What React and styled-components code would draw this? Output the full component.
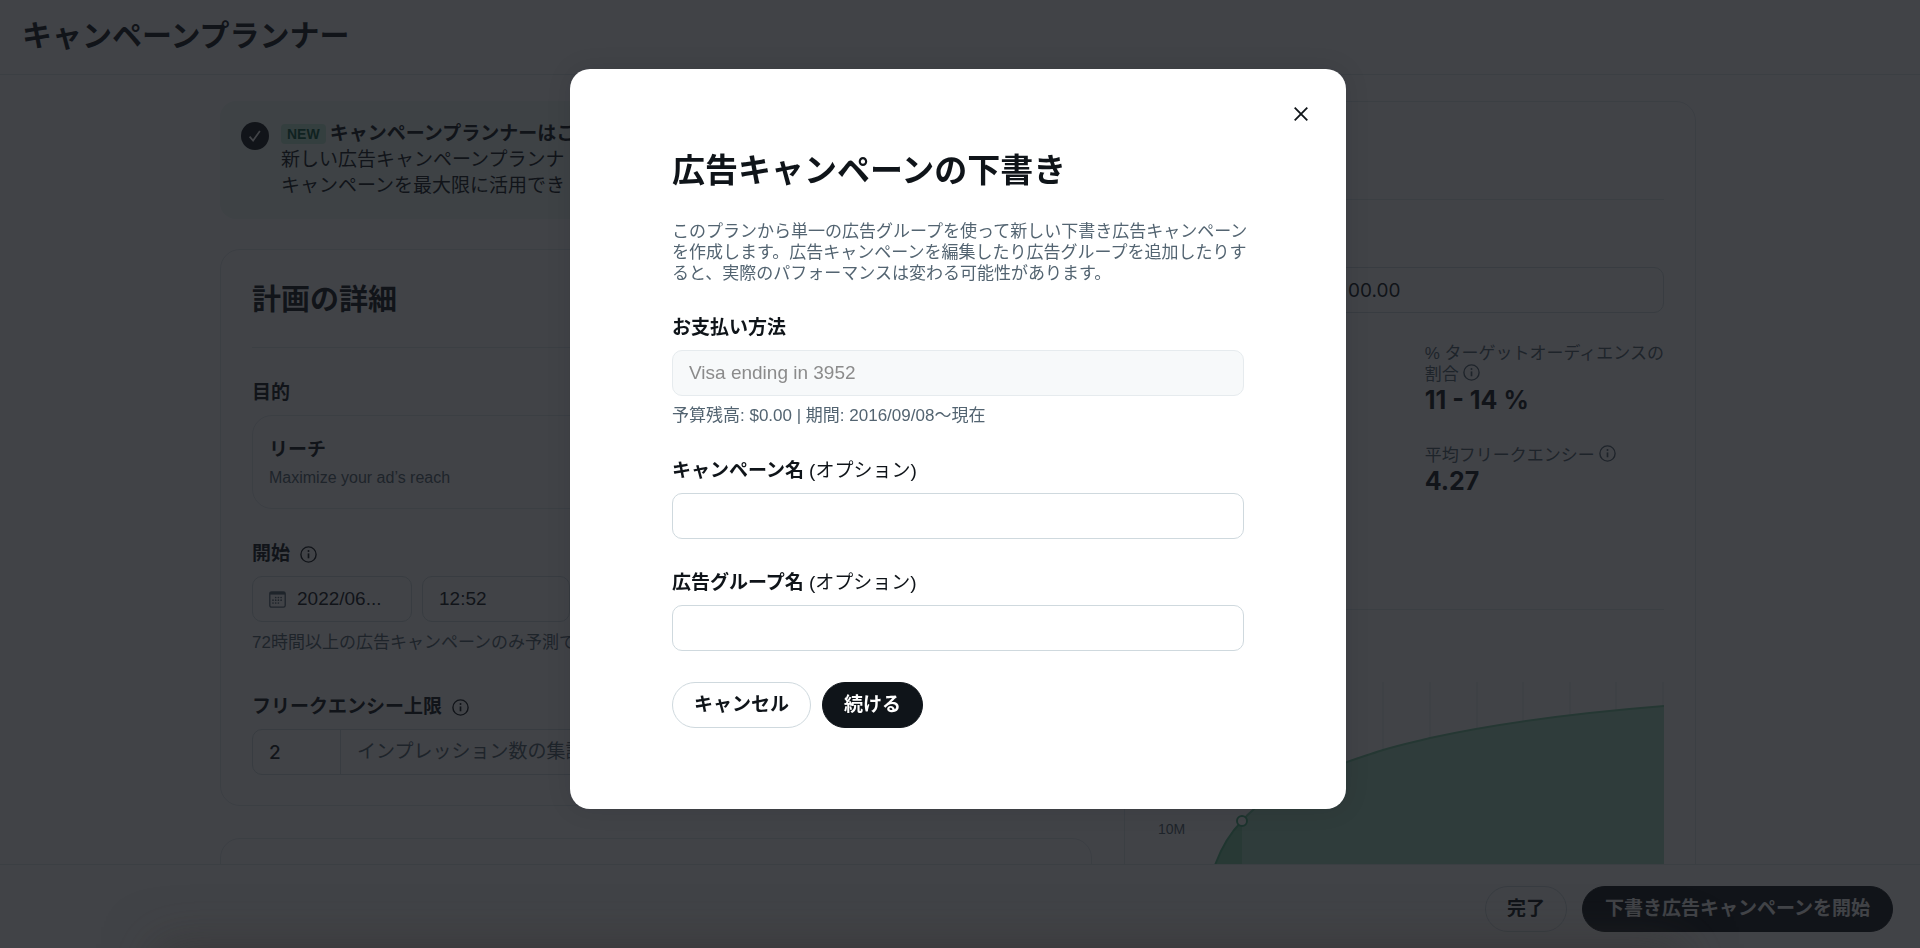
import React from "react";
import styled, { createGlobalStyle, css } from "styled-components";

const ink = "#0f1419";
const muted = "#536471";
const line = "#cfd9de";
const hairline = "#e1e8ec";
const figures = `Inter, "Noto Sans CJK JP", sans-serif`;

const GlobalStyle = createGlobalStyle`
  *, *::before, *::after { box-sizing: border-box; }
  body {
    margin: 0;
    background: #fff;
    color: ${ink};
    font-family: "Liberation Sans", "Noto Sans CJK JP", sans-serif;
    font-size: 19px;
    line-height: 24px;
  }
  input, button { font: inherit; color: inherit; }
  h1, h2, p { margin: 0; }
`;

const Page = styled.div`
  display: flex;
  flex-direction: column;
  height: 100vh;
  overflow: hidden;
`;

const Header = styled.header`
  flex: none;
  padding: 18px 22px 20px;
  border-bottom: 1px solid ${hairline};
`;

const PageTitle = styled.h1`
  font-size: 30px;
  line-height: 36px;
  font-weight: 700;
`;

const Main = styled.main`
  flex: 1;
  min-height: 0;
  overflow: hidden;
  display: grid;
  grid-template-columns: 872fr 572fr;
  gap: 32px;
  align-items: start;
  padding: 26px 224px 0 220px;
`;

const Column = styled.div`
  display: flex;
  flex-direction: column;
  min-width: 0;
`;

const Alert = styled.section`
  display: flex;
  gap: 12px;
  padding: 20px 20px 20px 21px;
  margin-bottom: 30px;
  border-radius: 16px;
  background: #eef9f5;
  line-height: 26px;
`;

const AlertText = styled.div`
  min-width: 0;
  white-space: nowrap;
  overflow: hidden;
`;

const AlertIcon = styled.svg`
  flex: none;
  margin-top: 1px;
`;

const Badge = styled.span`
  display: inline-block;
  padding: 0 6px;
  margin-right: 4px;
  border-radius: 4px;
  background: #bfe9d6;
  color: #0a5c40;
  font-size: 14px;
  line-height: 20px;
  font-weight: 700;
  vertical-align: 1px;
`;

const Card = styled.section`
  padding: 0 31px 30px;
  border: 1px solid ${hairline};
  border-radius: 20px;
  min-height: ${(p) => (p.$empty ? "200px" : "0")};
  margin-bottom: 32px;
`;

const CardHeader = styled.div`
  padding: 32px 0 29px;
  min-height: 98px;
  border-bottom: 1px solid ${hairline};
`;

const CardTitle = styled.h2`
  font-size: 29px;
  line-height: 36px;
  font-weight: 700;
`;

const Field = styled.div`
  display: flex;
  flex-direction: column;
  margin-top: 33px;
`;

const Label = styled.label`
  display: flex;
  align-items: center;
  gap: ${(p) => (p.$tight ? "5px" : "10px")};
  margin-bottom: 10px;
  font-weight: 700;
`;

const Optional = styled.span`
  font-weight: 400;
`;

const Hint = styled.p`
  padding: ${(p) => (p.$flush ? "9px 0 0" : "10px 0 8px")};
  color: ${muted};
  font-size: 17px;
  line-height: 22px;
  white-space: nowrap;
`;

const ChoiceBox = styled.div`
  padding: 22px 16px;
  height: 94px;
  border: 1px solid ${hairline};
  border-radius: 20px;
`;

const ChoiceName = styled.div`
  font-weight: 700;
`;

const ChoiceNote = styled.div`
  padding-top: 4px;
  color: ${muted};
  font-size: 16px;
`;

const control = css`
  height: 46px;
  border: 1px solid ${line};
  border-radius: 10px;
  background: #fff;
`;

const TextInput = styled.input`
  ${control}
  width: 100%;
  min-width: 0;
  padding: 0 16px;
  &:disabled {
    background: #f7f9fa;
    border-color: #e6ebee;
    color: #8b8b8b;
    opacity: 1;
  }
`;

const DateRow = styled.div`
  display: flex;
  gap: 10px;
`;

const DateBox = styled.div`
  ${control}
  display: flex;
  align-items: center;
  gap: 11px;
  width: 160px;
  padding: 0 16px;
`;

const TimeInput = styled(TextInput)`
  width: 148px;
`;

const BareInput = styled.input`
  flex: 1;
  min-width: 0;
  padding: 0;
  border: 0;
  background: none;
`;

const AddonBox = styled.div`
  ${control}
  display: flex;
  align-items: center;
`;

const CountInput = styled.input`
  width: 88px;
  height: 100%;
  padding: 0 16px;
  border: 0;
  border-right: 1px solid ${line};
  background: none;
  && { font-family: ${figures}; font-weight: 500; }
`;

const Addon = styled.span`
  padding-left: 16px;
  color: ${muted};
  white-space: nowrap;
`;

const Budget = styled.div`
  display: grid;
  grid-template-columns: 175fr 333fr;
  padding: 67px 0 30px;
`;

const BudgetInput = styled(TextInput)`
  grid-column: 2;
  && { font-family: ${figures}; }
`;

const Stats = styled.div`
  display: grid;
  grid-template-columns: 270fr 238fr;
  row-gap: 30px;
  min-height: 267px;
  align-content: start;
  border-bottom: 1px solid ${hairline};
`;

const Stat = styled.div`
  grid-column: 2;
  font-size: 17px;
  line-height: 21px;
  color: ${muted};
  white-space: nowrap;
  svg { vertical-align: -1px; margin-left: 4px; }
`;

const StatValue = styled.div`
  color: ${ink};
  font-family: ${figures};
  font-size: 25px;
  line-height: 30px;
  font-weight: 700;
`;

const Chart = styled.svg`
  display: block;
  width: 100%;
  margin-top: 72px;
`;

const Footer = styled.footer`
  flex: none;
  display: flex;
  justify-content: flex-end;
  gap: 15px;
  padding: 21px 27px 16px;
  border-top: 1px solid ${hairline};
  background: #fff;
`;

const Button = styled.button`
  height: 46px;
  padding: 0 ${(p) => (p.$wide ? "22px" : "21px")};
  border: 1px solid ${(p) => (p.$primary ? ink : line)};
  border-radius: 23px;
  background: ${(p) => (p.$primary ? ink : "#fff")};
  color: ${(p) => (p.$primary ? "#fff" : ink)};
  font-weight: 700;
  white-space: nowrap;
  cursor: pointer;
`;

const Backdrop = styled.div`
  position: fixed;
  inset: 0;
  display: flex;
  justify-content: center;
  align-items: flex-start;
  padding: 69px 4px 0 0;
  overflow: hidden;
  background: rgba(17, 20, 25, 0.8);
  &::after {
    content: "";
    position: absolute;
    top: 100%;
    left: 160px;
    right: 240px;
    height: 60px;
    box-shadow: 0 0 50px 4px rgba(50, 46, 44, 0.5);
  }
`;

const Dialog = styled.form`
  position: relative;
  width: 776px;
  max-width: 100%;
  padding: 82px 102px 81px;
  border-radius: 20px;
  background: #fff;
  box-shadow: 0 0 24px rgba(15, 20, 25, 0.12);
`;

const CloseButton = styled.button`
  position: absolute;
  top: 33px;
  right: 33px;
  display: grid;
  place-items: center;
  width: 24px;
  height: 24px;
  padding: 0;
  border: 0;
  background: none;
  cursor: pointer;
`;

const DialogTitle = styled.h2`
  font-size: 33px;
  line-height: 40px;
  font-weight: 700;
`;

const Description = styled.p`
  margin-top: 30px;
  color: ${muted};
  font-size: 17px;
  line-height: 21px;
  white-space: nowrap;
`;

const DialogField = styled(Field)`
  margin-top: 32px;
`;

const Actions = styled.div`
  display: flex;
  gap: 11px;
  margin-top: 31px;
`;

function InfoIcon() {
  return (
    <svg width="17" height="17" viewBox="0 0 17 17" fill="none" stroke="currentColor" strokeWidth="1.4" aria-hidden="true">
      <circle cx="8.5" cy="8.5" r="7.6" />
      <path d="M8.5 7.4v4.9" strokeWidth="1.7" />
      <circle cx="8.5" cy="5.1" r="1" fill="currentColor" stroke="none" />
    </svg>
  );
}

function CalendarIcon() {
  const dots = [[6.7, 6.5], [9.4, 6.5], [12.1, 6.5], [4, 9.2], [6.7, 9.2], [9.4, 9.2], [12.1, 9.2], [4, 12], [6.7, 12], [9.4, 12]];
  return (
    <svg width="17" height="17" viewBox="0 0 17 17" fill="none" color={muted} aria-hidden="true">
      <rect x="0.8" y="0.8" width="15.4" height="15.4" rx="1.8" stroke="currentColor" strokeWidth="1.3" />
      <path d="M1 1h15v2.6H1z" fill="currentColor" />
      {dots.map(([x, y]) => (
        <circle key={`${x}-${y}`} cx={x} cy={y} r="0.85" fill="currentColor" />
      ))}
    </svg>
  );
}

const gridX = [227, 274, 321, 367, 414, 460, 507];
const curve = "M86 139 C104 118 140 96 191 80 C205 75 215 72 227 68 C243 63 258 60 274 56 C338 42 420 31 508 24";

function ReachChart() {
  return (
    <Chart viewBox="0 0 508 260" role="img" aria-label="10M">
      {gridX.map((x) => (
        <path key={x} d={`M${x} 0V260`} stroke={hairline} />
      ))}
      <path d={`${curve} V260 H86 Z`} fill="#a6dcc0" />
      <path d="M44 260 C49 205 60 165 86 139 V260 Z" fill="#80cca4" />
      <path d={curve} fill="none" stroke="#74c39b" strokeWidth="2" />
      <path d="M44 260 C49 205 60 165 86 139" fill="none" stroke="#58b889" strokeWidth="2" />
      <circle cx="86" cy="139" r="5" fill="#fff" stroke="#48b080" strokeWidth="2" />
      <text x="2" y="152" fontSize="14" fill={muted}>10M</text>
    </Chart>
  );
}

export default function App() {
  return (
    <>
      <GlobalStyle />
      <Page lang="ja">
        <Header>
          <PageTitle>キャンペーンプランナー</PageTitle>
        </Header>
        <Main>
          <Column>
            <Alert>
              <AlertIcon width="28" height="28" viewBox="0 0 28 28" aria-hidden="true">
                <circle cx="14" cy="14" r="14" fill={ink} />
                <path d="M8.6 14.6l3.5 4 6.8-9.6" fill="none" stroke="#fff" strokeWidth="1.7" />
              </AlertIcon>
              <AlertText>
                <Badge>NEW</Badge>
                <strong>キャンペーンプランナーはこ</strong>
                <br />
                新しい広告キャンペーンプランナ
                <br />
                キャンペーンを最大限に活用でき
              </AlertText>
            </Alert>
            <Card>
              <CardHeader>
                <CardTitle>計画の詳細</CardTitle>
              </CardHeader>
              <Field>
                <Label as="div">目的</Label>
                <ChoiceBox>
                  <ChoiceName>リーチ</ChoiceName>
                  <ChoiceNote>Maximize your ad’s reach</ChoiceNote>
                </ChoiceBox>
              </Field>
              <Field>
                <Label htmlFor="start-date">開始 <InfoIcon /></Label>
                <DateRow>
                  <DateBox>
                    <CalendarIcon />
                    <BareInput id="start-date" defaultValue="2022/06..." />
                  </DateBox>
                  <TimeInput aria-label="開始" defaultValue="12:52" />
                </DateRow>
                <Hint>72時間以上の広告キャンペーンのみ予測で</Hint>
              </Field>
              <Field>
                <Label htmlFor="frequency">フリークエンシー上限 <InfoIcon /></Label>
                <AddonBox>
                  <CountInput id="frequency" defaultValue="2" />
                  <Addon>インプレッション数の集計</Addon>
                </AddonBox>
              </Field>
            </Card>
            <Card $empty />
          </Column>
          <Card>
            <CardHeader />
            <Budget>
              <BudgetInput aria-label="予算" defaultValue="00.00" />
            </Budget>
            <Stats>
              <Stat>
                % ターゲットオーディエンスの
                <br />
                割合<InfoIcon />
                <StatValue>11 - 14 %</StatValue>
              </Stat>
              <Stat>
                平均フリークエンシー<InfoIcon />
                <StatValue>4.27</StatValue>
              </Stat>
            </Stats>
            <ReachChart />
          </Card>
        </Main>
        <Footer>
          <Button type="button">完了</Button>
          <Button type="button" $primary $wide>下書き広告キャンペーンを開始</Button>
        </Footer>
      </Page>
      <Backdrop lang="ja">
        <Dialog role="dialog" aria-modal="true" aria-labelledby="dialog-title" onSubmit={(e) => e.preventDefault()}>
          <CloseButton type="button" aria-label="閉じる">
            <svg width="14" height="14" viewBox="0 0 14 14" stroke={ink} strokeWidth="1.8" aria-hidden="true">
              <path d="M0.7 0.7l12.6 12.6M13.3 0.7L0.7 13.3" />
            </svg>
          </CloseButton>
          <DialogTitle id="dialog-title">広告キャンペーンの下書き</DialogTitle>
          <Description>
            このプランから単一の広告グループを使って新しい下書き広告キャンペーン
            <br />
            を作成します。広告キャンペーンを編集したり広告グループを追加したりす
            <br />
            ると、実際のパフォーマンスは変わる可能性があります。
          </Description>
          <DialogField>
            <Label $tight htmlFor="payment">お支払い方法</Label>
            <TextInput id="payment" disabled defaultValue="Visa ending in 3952" />
            <Hint $flush>予算残高: $0.00 | 期間: 2016/09/08～現在</Hint>
          </DialogField>
          <DialogField>
            <Label $tight htmlFor="campaign">キャンペーン名 <Optional>(オプション)</Optional></Label>
            <TextInput id="campaign" />
          </DialogField>
          <DialogField>
            <Label $tight htmlFor="group">広告グループ名 <Optional>(オプション)</Optional></Label>
            <TextInput id="group" />
          </DialogField>
          <Actions>
            <Button type="button">キャンセル</Button>
            <Button type="submit" $primary>続ける</Button>
          </Actions>
        </Dialog>
      </Backdrop>
    </>
  );
}
